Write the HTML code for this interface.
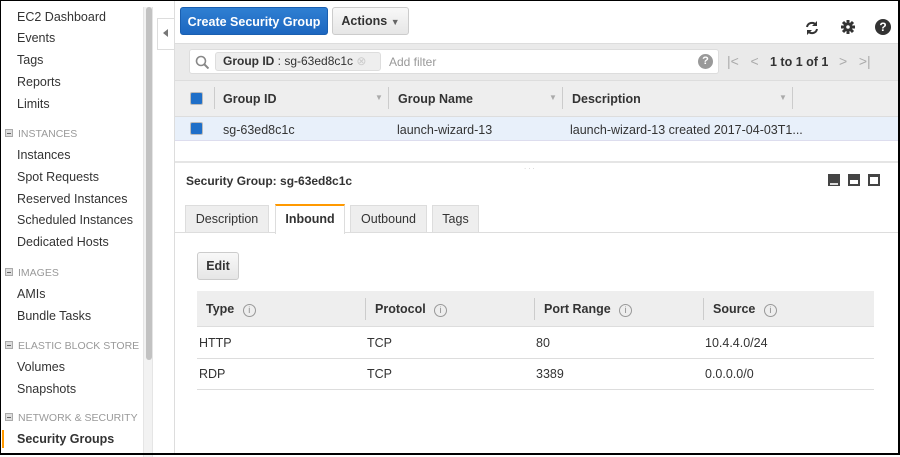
<!DOCTYPE html><html><head><style>
*{box-sizing:border-box;margin:0;padding:0}
body{width:900px;height:455px;overflow:hidden;font-family:"Liberation Sans",sans-serif;font-size:12.5px;color:#333;background:#fff;position:relative}
.frame{position:absolute;inset:0;border:1px solid #000;border-bottom-width:2px;border-right-width:2px;pointer-events:none;z-index:9}
.side{position:absolute;left:0;top:0;width:143px;height:455px}
.side div{position:absolute;left:17px;font-size:12.5px;color:#333}
.side .h{left:5px;font-size:10.5px;color:#999}
.side .h i{display:inline-block;width:8px;height:8px;border:1px solid #aaa;background:#ddd;vertical-align:0;margin-right:5px;position:relative}
.side .h i:after{content:"";position:absolute;left:1px;right:1px;top:3px;height:1px;background:#666}
.sb{position:absolute;left:143px;top:7px;width:10px;height:450px;background:#f2f2f2;border-left:1px solid #e5e5e5;border-right:1px solid #e5e5e5}
.sb b{position:absolute;left:2px;top:0;width:6px;height:353px;background:#c2c2c2;border-radius:3px}
.tab{position:absolute;left:157px;top:18px;width:17px;height:32px;background:#fff;border:1px solid #ddd;border-right:none}
.main{position:absolute;left:174px;top:0;right:0;bottom:0;border-left:1px solid #ddd}
.abs{position:absolute}
.btn{position:absolute;border-radius:3px;font-weight:bold;font-size:12.5px;text-align:center}
th,td{text-align:left}
</style></head><body>
<div class="side">
<div style="top:10px">EC2 Dashboard</div><div style="top:31px">Events</div><div style="top:53px">Tags</div><div style="top:75px">Reports</div><div style="top:97px">Limits</div>
<div class="h" style="top:128px"><i></i>INSTANCES</div>
<div style="top:148px">Instances</div><div style="top:170px">Spot Requests</div><div style="top:192px">Reserved Instances</div><div style="top:213px">Scheduled Instances</div><div style="top:235px">Dedicated Hosts</div>
<div class="h" style="top:267px"><i></i>IMAGES</div>
<div style="top:287px">AMIs</div><div style="top:309px">Bundle Tasks</div>
<div class="h" style="top:340px"><i></i>ELASTIC BLOCK STORE</div>
<div style="top:360px">Volumes</div><div style="top:382px">Snapshots</div>
<div class="h" style="top:412px"><i></i>NETWORK &amp; SECURITY</div>
<div style="top:432px;font-weight:bold">Security Groups</div>
<span style="position:absolute;left:2px;top:430px;width:2px;height:18px;background:#f90"></span>
</div>
<div class="sb"><b></b></div>
<div class="tab"><span style="position:absolute;left:5px;top:10px;border:4px solid transparent;border-right:5px solid #777;border-left:0"></span></div>
<div class="main">
<div class="btn" style="left:5px;top:7px;width:148px;height:28px;line-height:28px;background:linear-gradient(#2f7fd2,#1d67c0);color:#fff;border:1px solid #1a5fb0">Create Security Group</div>
<div class="btn" style="left:157px;top:7px;width:77px;height:28px;line-height:26px;background:linear-gradient(#f8f8f8,#e6e6e6);border:1px solid #ccc;color:#333">Actions <span style="font-size:9px;color:#666">&#9660;</span></div>
<svg class="abs" style="left:629px;top:20px" width="16" height="16" viewBox="0 0 16 16"><path d="M3 7a5 5 0 0 1 9-2M13 9a5 5 0 0 1-9 2" stroke="#333" stroke-width="2" fill="none"/><path d="M13 1v5h-5zM3 15v-5h5z" fill="#333"/></svg>
<svg class="abs" style="left:666px;top:20px" width="14" height="14" viewBox="0 0 14 14"><circle cx="7" cy="7" r="4.5" fill="#333"/><g stroke="#333" stroke-width="3"><path d="M7 0v14M0 7h14M2 2l10 10M12 2L2 12"/></g><circle cx="7" cy="7" r="1.8" fill="#fff"/></svg>
<div class="abs" style="left:700px;top:19px;width:16px;height:16px;border-radius:50%;background:#333;color:#fff;font-weight:bold;font-size:12px;text-align:center;line-height:16px">?</div>
<div class="abs" style="left:0;top:43px;width:725px;height:37px;background:#eaeaea;border-top:1px solid #ddd"></div>
<div class="abs" style="left:14px;top:49px;width:530px;height:25px;background:#fff;border:1px solid #ddd;border-radius:3px">
<svg class="abs" style="left:5px;top:5px" width="14" height="14"><circle cx="6" cy="6" r="4.5" stroke="#888" stroke-width="1.6" fill="none"/><path d="M9.5 9.5l4 4" stroke="#888" stroke-width="2"/></svg>
<div class="abs" style="left:25px;top:2px;width:166px;height:19px;background:#eee;border:1px solid #ddd;border-radius:3px;line-height:17px;padding-left:7px;font-size:12px"><b>Group ID</b> : sg-63ed8c1c <span style="color:#ccc">&#8855;</span></div>
<div class="abs" style="left:199px;top:5px;color:#999;font-size:12px">Add filter</div>
<div class="abs" style="left:508px;top:4px;width:15px;height:15px;border-radius:50%;background:#999;color:#fff;font-weight:bold;font-size:11px;text-align:center;line-height:15px">?</div>
</div>
<div class="abs" style="left:552px;top:53px;color:#aaa;font-size:14px">|&lt;&nbsp;&nbsp;&nbsp;&lt;</div>
<div class="abs" style="left:595px;top:55px;font-weight:bold;font-size:12.5px">1 to 1 of 1</div>
<div class="abs" style="left:664px;top:53px;color:#aaa;font-size:14px">&gt;&nbsp;&nbsp;&nbsp;&gt;|</div>
<div class="abs" style="left:0;top:80px;width:725px;height:37px;background:#eee;border-top:1px solid #ddd;border-bottom:1px solid #ddd"></div>
<div class="abs" style="left:0;top:117px;width:725px;height:24px;background:#e8f0fa;border-bottom:1px solid #dde"></div>
<div class="abs" style="left:15px;top:92px;width:13px;height:13px;background:#1f6fc8;border:1px solid #bbb;border-radius:2px"></div>
<div class="abs" style="left:15px;top:122px;width:13px;height:13px;background:#1f6fc8;border:1px solid #bbb;border-radius:2px"></div>
<div class="abs" style="left:39px;top:87px;width:1px;height:22px;background:#ccc"></div>
<div class="abs" style="left:213px;top:87px;width:1px;height:22px;background:#ccc"></div>
<div class="abs" style="left:387px;top:87px;width:1px;height:22px;background:#ccc"></div>
<div class="abs" style="left:617px;top:87px;width:1px;height:22px;background:#ccc"></div>
<div class="abs" style="left:48px;top:92px;font-weight:bold">Group ID</div><div class="abs" style="left:200px;top:93px;color:#aaa;font-size:8px">&#9660;</div>
<div class="abs" style="left:223px;top:92px;font-weight:bold">Group Name</div><div class="abs" style="left:374px;top:93px;color:#aaa;font-size:8px">&#9660;</div>
<div class="abs" style="left:397px;top:92px;font-weight:bold">Description</div><div class="abs" style="left:604px;top:93px;color:#aaa;font-size:8px">&#9660;</div>
<div class="abs" style="left:48px;top:123px">sg-63ed8c1c</div>
<div class="abs" style="left:222px;top:123px">launch-wizard-13</div>
<div class="abs" style="left:395px;top:123px">launch-wizard-13 created 2017-04-03T1...</div>
<div class="abs" style="left:0;top:161px;width:725px;height:2px;background:#e5e5e5"></div>
<div class="abs" style="left:349px;top:162px;color:#ccc;font-size:8px;letter-spacing:2px">...</div>
<div class="abs" style="left:11px;top:174px;font-weight:bold;font-size:12px">Security Group: sg-63ed8c1c</div>
<div class="abs" style="left:653px;top:174px;width:12px;height:12px;background:#444;border-bottom:4px solid #444"><i style="position:absolute;left:2px;right:2px;bottom:-3px;height:2px;background:#ddd"></i></div>
<div class="abs" style="left:673px;top:174px;width:12px;height:12px;background:#444"><i style="position:absolute;left:2px;right:2px;bottom:2px;height:4px;background:#fff"></i></div>
<div class="abs" style="left:693px;top:174px;width:12px;height:12px;background:#444"><i style="position:absolute;left:2px;right:2px;bottom:2px;height:7px;background:#fff"></i></div>
<div class="abs" style="left:0;top:232px;width:725px;height:1px;background:#ddd"></div>
<div class="abs" style="left:10px;top:205px;width:84px;height:28px;background:#eee;border:1px solid #ddd;text-align:center;line-height:27px">Description</div>
<div class="abs" style="left:100px;top:204px;width:70px;height:30px;background:#fff;border:1px solid #ddd;border-top:2px solid #f90;border-bottom:none;text-align:center;line-height:27px;font-weight:bold">Inbound</div>
<div class="abs" style="left:175px;top:205px;width:77px;height:28px;background:#eee;border:1px solid #ddd;text-align:center;line-height:27px">Outbound</div>
<div class="abs" style="left:257px;top:205px;width:47px;height:28px;background:#eee;border:1px solid #ddd;text-align:center;line-height:27px">Tags</div>
<div class="btn" style="left:22px;top:252px;width:42px;height:28px;line-height:27px;background:linear-gradient(#f8f8f8,#e6e6e6);border:1px solid #ccc">Edit</div>
<div class="abs" style="left:22px;top:291px;width:677px;height:36px;background:#eee;border-bottom:1px solid #ddd"></div>
<div class="abs" style="left:190px;top:298px;width:1px;height:22px;background:#ccc"></div>
<div class="abs" style="left:359px;top:298px;width:1px;height:22px;background:#ccc"></div>
<div class="abs" style="left:528px;top:298px;width:1px;height:22px;background:#ccc"></div>
<div class="abs" style="left:31px;top:302px;font-weight:bold">Type <span style="display:inline-block;width:13px;height:13px;border:1px solid #999;border-radius:50%;font-size:9px;text-align:center;line-height:11px;color:#888;font-weight:normal;margin-left:5px">i</span></div>
<div class="abs" style="left:200px;top:302px;font-weight:bold">Protocol <span style="display:inline-block;width:13px;height:13px;border:1px solid #999;border-radius:50%;font-size:9px;text-align:center;line-height:11px;color:#888;font-weight:normal;margin-left:5px">i</span></div>
<div class="abs" style="left:369px;top:302px;font-weight:bold">Port Range <span style="display:inline-block;width:13px;height:13px;border:1px solid #999;border-radius:50%;font-size:9px;text-align:center;line-height:11px;color:#888;font-weight:normal;margin-left:5px">i</span></div>
<div class="abs" style="left:538px;top:302px;font-weight:bold">Source <span style="display:inline-block;width:13px;height:13px;border:1px solid #999;border-radius:50%;font-size:9px;text-align:center;line-height:11px;color:#888;font-weight:normal;margin-left:5px">i</span></div>
<div class="abs" style="left:22px;top:358px;width:677px;height:1px;background:#ddd"></div>
<div class="abs" style="left:22px;top:389px;width:677px;height:1px;background:#ddd"></div>
<div class="abs" style="left:24px;top:336px">HTTP</div><div class="abs" style="left:192px;top:336px">TCP</div><div class="abs" style="left:361px;top:336px">80</div><div class="abs" style="left:530px;top:336px">10.4.4.0/24</div>
<div class="abs" style="left:24px;top:367px">RDP</div><div class="abs" style="left:192px;top:367px">TCP</div><div class="abs" style="left:361px;top:367px">3389</div><div class="abs" style="left:530px;top:367px">0.0.0.0/0</div>
</div>
<div class="frame"></div>
</body></html>
